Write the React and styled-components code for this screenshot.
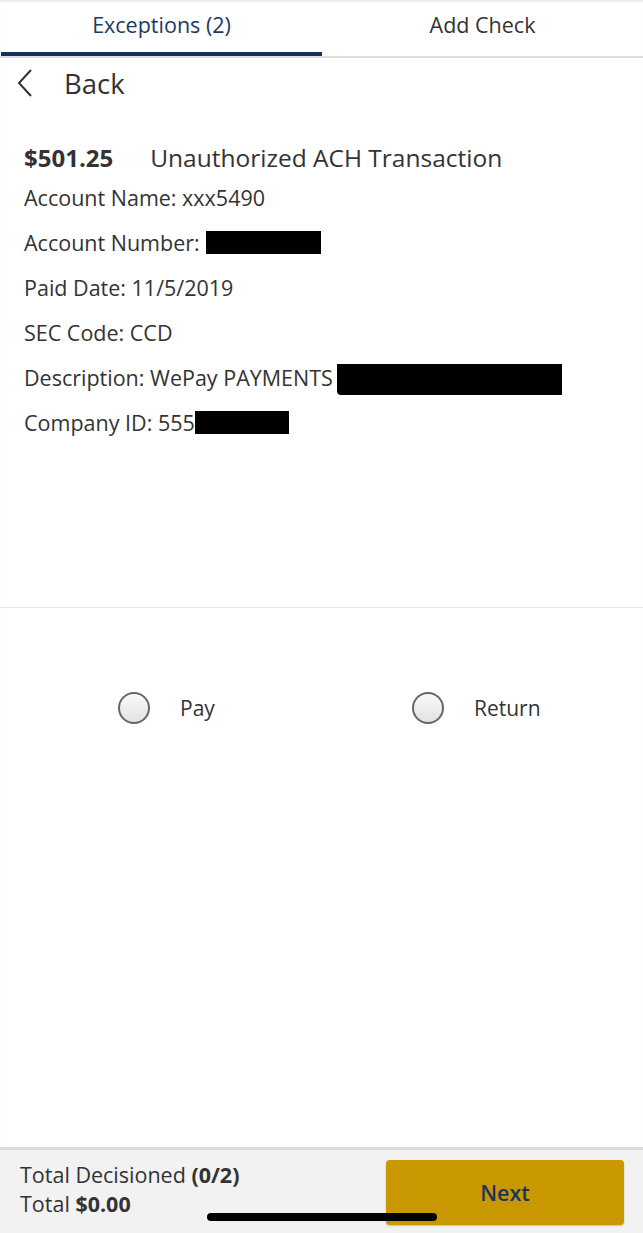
import React from 'react';
import styled, { createGlobalStyle } from 'styled-components';

const GlobalStyle = createGlobalStyle`
  * { box-sizing: border-box; }
  body {
    margin: 0;
    font-family: "Open Sans", "Noto Sans", sans-serif;
    color: #333;
    background: #fff;
  }
`;

const details = [
  { label: 'Account Name:', value: 'xxx5490' },
  { label: 'Account Number:', redact: 115, gap: 6 },
  { label: 'Paid Date:', value: '11/5/2019' },
  { label: 'SEC Code:', value: 'CCD' },
  { label: 'Description:', value: 'WePay PAYMENTS', redact: 225, tall: true, gap: 4 },
  { label: 'Company ID:', value: '555', redact: 94, gap: 0 },
];

function App() {
  return (
    <Page>
      <GlobalStyle />
      <Tabs>
        <Tab active>Exceptions (2)</Tab>
        <Tab>Add Check</Tab>
      </Tabs>
      <BackRow>
        <svg width="16" height="28" viewBox="0 0 16 28">
          <path d="M14 1 L2 14 L14 27" fill="none" stroke="#333" strokeWidth="2" />
        </svg>
        <span>Back</span>
      </BackRow>
      <Detail>
        <Heading>
          <Amount>$501.25</Amount>
          <span>Unauthorized ACH Transaction</span>
        </Heading>
        {details.map((d) => (
          <Line key={d.label}>
            {d.label}
            {d.value && <>&nbsp;{d.value}</>}
            {d.redact && <Redact w={d.redact} tall={d.tall} gap={d.gap} />}
          </Line>
        ))}
      </Detail>
      <Choices>
        <Choice>
          <Radio />
          <span>Pay</span>
        </Choice>
        <Choice>
          <Radio />
          <span>Return</span>
        </Choice>
      </Choices>
      <Footer>
        <Totals>
          <div>Total Decisioned <b>(0/2)</b></div>
          <div>Total <b>$0.00</b></div>
        </Totals>
        <NextButton>Next</NextButton>
        <HomeBar />
      </Footer>
    </Page>
  );
}

export default App;

const Page = styled.div`
  width: 643px;
  height: 1233px;
  display: flex;
  flex-direction: column;
  position: relative;
  overflow: hidden;
  box-shadow: inset 0 3px 3px -2px rgba(0, 0, 0, 0.12);
`;

const Tabs = styled.div`
  display: flex;
  height: 58px;
  border-bottom: 2px solid #dcdcdc;
`;

const Tab = styled.div`
  width: 50%;
  display: flex;
  justify-content: center;
  padding-top: 10px;
  font-size: 21.5px;
  color: ${(p) => (p.active ? '#1b3a63' : '#333')};
  border-bottom: 4px solid ${(p) => (p.active ? '#14325c' : 'transparent')};
  margin-left: ${(p) => (p.active ? '1px' : '0')};
  margin-bottom: -2px;
  height: 56px;
`;

const BackRow = styled.div`
  display: flex;
  align-items: center;
  gap: 31px;
  padding: 0 0 4px 17px;
  height: 54px;
  font-size: 27.5px;
  color: #333;
`;

const Detail = styled.div`
  padding: 30px 24px 0;
  height: 496px;
  border-bottom: 1px solid #e4e4e4;
`;

const Heading = styled.div`
  display: flex;
  align-items: baseline;
  gap: 37px;
  font-size: 24.5px;
  line-height: 32px;
  color: #333;
  margin-bottom: 9px;
`;

const Amount = styled.span`
  font-weight: 700;
  font-size: 24px;
`;

const Line = styled.div`
  display: flex;
  align-items: center;
  height: 45px;
  margin-top: -8px;
  margin-bottom: 8px;
  font-size: 21.5px;
  color: #333;
  &:first-of-type { margin-top: 0; }
`;

const Redact = styled.span`
  display: inline-block;
  width: ${(p) => p.w}px;
  height: ${(p) => (p.tall ? 31 : 23)}px;
  margin-left: ${(p) => p.gap}px;
  margin-top: ${(p) => (p.tall ? 4 : 0)}px;
  background: #000;
  border-bottom-left-radius: ${(p) => (p.tall ? 4 : 0)}px;
`;

const Choices = styled.div`
  display: flex;
  padding: 84px 0 0 118px;
`;

const Choice = styled.label`
  flex: 0 0 294px;
  display: flex;
  align-items: center;
  gap: 30px;
  font-size: 21px;
  color: #333;
`;

const Radio = styled.span`
  width: 32px;
  height: 32px;
  border-radius: 50%;
  border: 2px solid #666;
  background: linear-gradient(#fafafa, #e2e2e2);
`;

const Footer = styled.div`
  margin-top: auto;
  height: 86px;
  border-top: 3px solid #d9dcdc;
  background: #f2f2f2;
  display: flex;
  justify-content: space-between;
  padding: 10px 19px 0 20px;
  position: relative;
`;

const Totals = styled.div`
  display: flex;
  flex-direction: column;
  font-size: 21.5px;
  line-height: 29px;
  color: #333;
`;

const NextButton = styled.button`
  width: 238px;
  height: 65px;
  border: none;
  border-radius: 4px;
  background: #c99700;
  color: #1b3560;
  font-family: inherit;
  font-size: 21.5px;
  font-weight: 600;
  box-shadow: 0 1px 2px rgba(0, 0, 0, 0.2);
`;

const HomeBar = styled.div`
  position: absolute;
  left: 207px;
  bottom: 12px;
  width: 230px;
  height: 8px;
  border-radius: 4px;
  background: #000;
`;
